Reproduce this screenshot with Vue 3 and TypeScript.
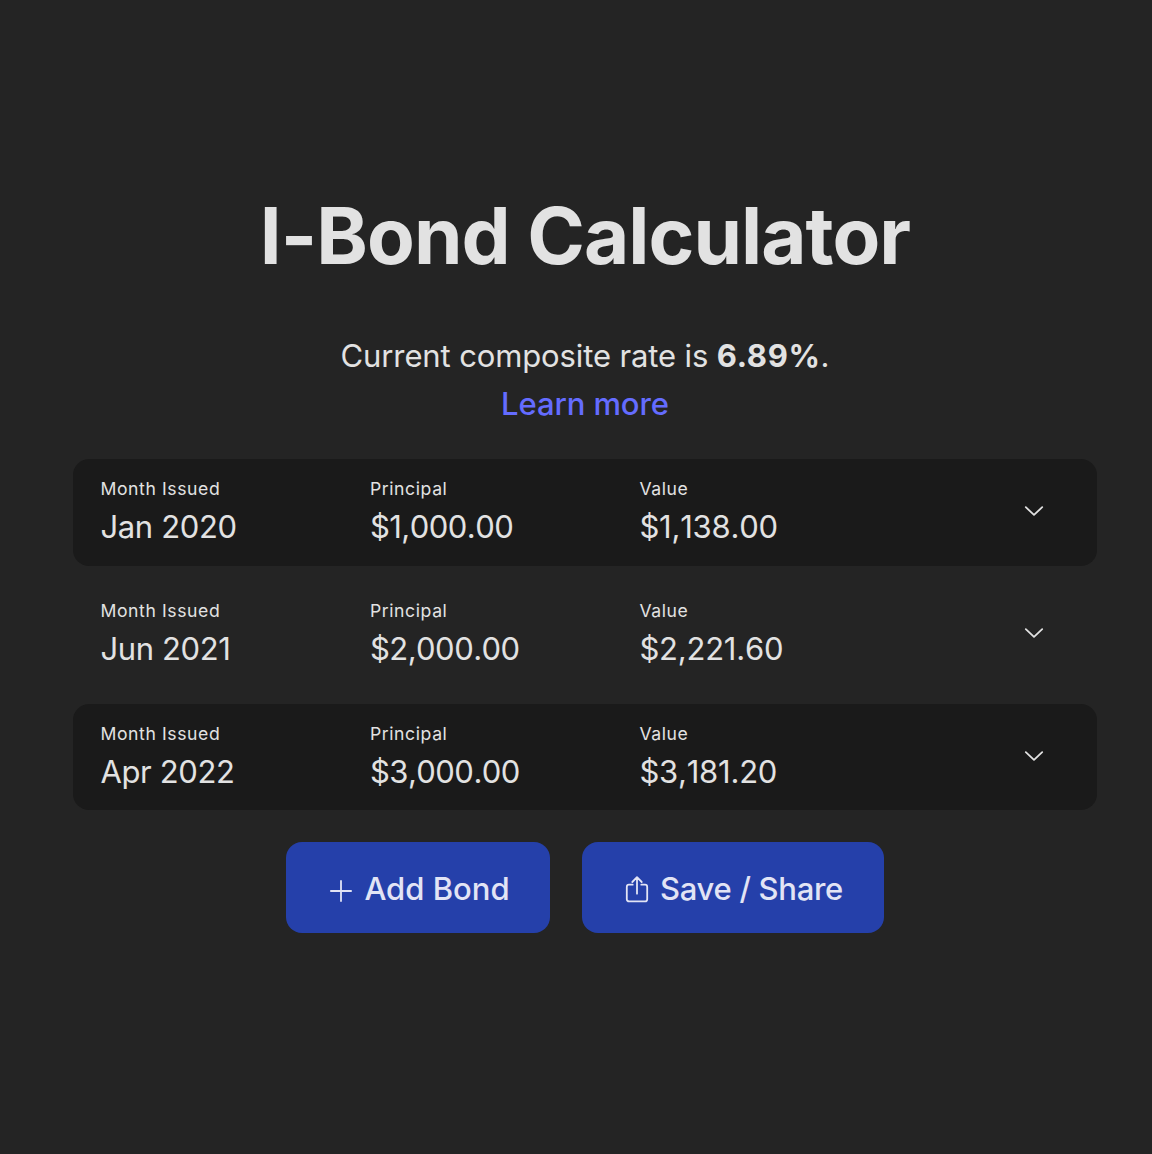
<script setup lang="ts">
interface Bond {
  issued: string
  principal: string
  value: string
}

const rate = '6.89%'

const bonds: Bond[] = [
  { issued: 'Jan 2020', principal: '$1,000.00', value: '$1,138.00' },
  { issued: 'Jun 2021', principal: '$2,000.00', value: '$2,221.60' },
  { issued: 'Apr 2022', principal: '$3,000.00', value: '$3,181.20' },
]
</script>

<template>
  <main class="page">
    <h1 class="title">I-Bond Calculator</h1>
    <p class="rate">Current composite rate is <strong>{{ rate }}</strong>.</p>
    <a class="learn" href="#">Learn more</a>

    <section class="bonds">
      <article v-for="bond in bonds" :key="bond.issued" class="bond">
        <div class="field">
          <span class="label">Month Issued</span>
          <span class="value">{{ bond.issued }}</span>
        </div>
        <div class="field">
          <span class="label">Principal</span>
          <span class="value principal">{{ bond.principal }}</span>
        </div>
        <div class="field">
          <span class="label">Value</span>
          <span class="value current">{{ bond.value }}</span>
        </div>
        <svg class="chevron" viewBox="0 0 20 12" aria-hidden="true">
          <path d="M1.8 2.2 10 9.9l8.2-7.7" />
        </svg>
      </article>
    </section>

    <div class="actions">
      <button class="button add" type="button">
        <svg class="icon" viewBox="0 0 24 28" aria-hidden="true">
          <path d="M12 5.9v20.2M1.9 16h20.2" />
        </svg>
        <span>Add Bond</span>
      </button>
      <button class="button share" type="button">
        <svg class="icon" viewBox="0 0 24 28" aria-hidden="true">
          <path d="M7.7 9.7H4a2.2 2.2 0 0 0-2.2 2.2v12.3A2.2 2.2 0 0 0 4 26.4h16a2.2 2.2 0 0 0 2.2-2.2V11.9A2.2 2.2 0 0 0 20 9.7h-3.7M12 18.7V2.3M7.3 7 12 2.2 16.7 7" />
        </svg>
        <span>Save / Share</span>
      </button>
    </div>
  </main>
</template>

<style>
body {
  background: #242424;
}
</style>

<style scoped>
.page {
  box-sizing: border-box;
  min-height: 1154px;
  padding: 188px 55px 0 73px;
  display: flex;
  flex-direction: column;
  align-items: center;
  background: #242424;
  color: #e2e2e2;
  font-family: Inter, "Liberation Sans", sans-serif;
  font-size: 31px;
  line-height: 48px;
}

.title {
  margin: 0;
  font-size: 78px;
  line-height: 96px;
  font-weight: 700;
  letter-spacing: -0.95px;
  white-space: nowrap;
}

.rate {
  margin: 48px 0 0;
  letter-spacing: -0.12px;
  white-space: nowrap;
}

.rate strong {
  letter-spacing: 0.65px;
}

.learn {
  color: #646cff;
  font-weight: 500;
  letter-spacing: -0.1px;
  text-decoration: none;
}

.bonds {
  align-self: stretch;
  display: flex;
  flex-direction: column;
  gap: 16px;
  margin-top: 31.2px;
}

.bond {
  box-sizing: border-box;
  height: 106.4px;
  padding: 15.8px 53px 0 27.4px;
  display: grid;
  grid-template-columns: 269.5px 269.5px 1fr 20px;
  border-radius: 16px;
}

.bond:nth-child(odd) {
  background: #1a1a1a;
}

.field {
  display: flex;
  flex-direction: column;
  white-space: nowrap;
}

.label {
  font-size: 17.6px;
  line-height: 28px;
  letter-spacing: 0.6px;
}

.value {
  line-height: 48px;
  letter-spacing: -0.35px;
  font-kerning: none;
}

.principal {
  letter-spacing: -0.52px;
}

.current {
  letter-spacing: -0.22px;
}

.chevron {
  width: 20px;
  height: 12px;
  margin-top: 30px;
}

.chevron path,
.icon path {
  fill: none;
  stroke: currentColor;
  stroke-width: 1.8;
  stroke-linecap: round;
  stroke-linejoin: round;
}

.actions {
  display: flex;
  gap: 32px;
  margin-top: 32px;
}

.button {
  box-sizing: border-box;
  height: 91px;
  padding: 2px 0 0;
  display: flex;
  align-items: center;
  justify-content: center;
  border: 0;
  border-radius: 16px;
  background: #2540aa;
  color: #e2e4f5;
  font: inherit;
  font-weight: 500;
  white-space: nowrap;
}

.add {
  width: 264px;
  padding-left: 3px;
  gap: 11px;
}

.share {
  width: 302px;
  padding-left: 2px;
  gap: 11px;
  letter-spacing: -0.28px;
}

.icon {
  width: 24px;
  height: 28px;
}
</style>
